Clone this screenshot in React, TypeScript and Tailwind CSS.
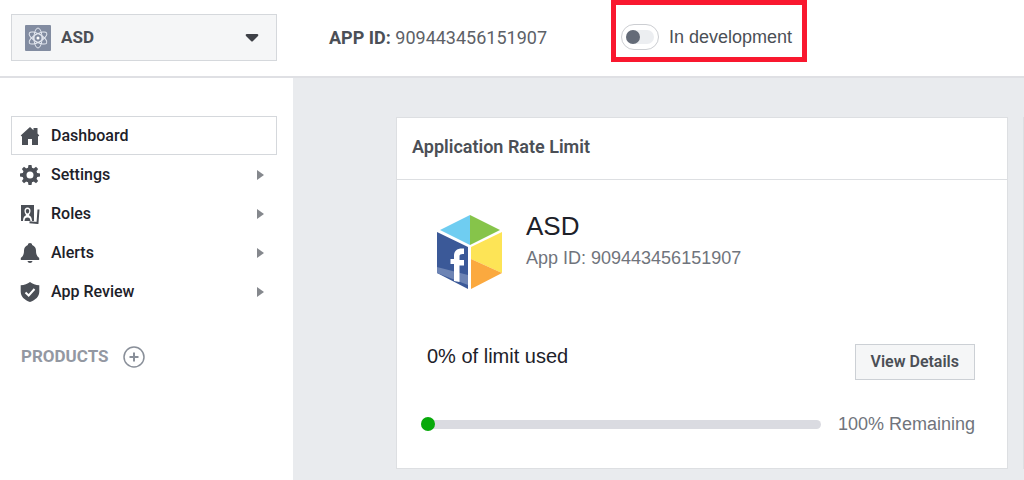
import React, { useState } from "react";

const iconClass = "w-5 h-5 shrink-0 text-[#4b4f56]";

function HomeIcon() {
  return (
    <svg className={iconClass} viewBox="0 0 20 20" fill="currentColor" aria-hidden="true">
      <path d="M10 1 0.7 9.4l1.2 1.2L2 10.500V19h6v-6h4v6h6v-8.500l.1.1 1.2-1.2L17.500 7.600V2h-4v2.200z" />
    </svg>
  );
}

function GearIcon() {
  return (
    <svg className={iconClass} viewBox="0 0 20 20" aria-hidden="true">
      <circle cx="10" cy="10" r="5.500" fill="none" stroke="currentColor" strokeWidth="4" />
      <g fill="currentColor">
        {[0, 45, 90, 135, 180, 225, 270, 315].map((angle) => (
          <path key={angle} d="M7.800 4 8.500 0h3l.7 4z" transform={`rotate(${angle} 10 10)`} />
        ))}
      </g>
    </svg>
  );
}

function RolesIcon() {
  return (
    <svg className={iconClass} viewBox="0 0 20 20" aria-hidden="true">
      <path d="M1 1h13v16H1z" fill="currentColor" />
      <path
        d="M7.500 3.500c-2 0-3 1.400-3 3.300 0 1.600.5 2.800 1.300 3.500v1.200C4.500 12 3.200 13 3 17h1.500c.3-2.500 1-3.500 3-3.500s2.700 1 3 3.500H12c-.2-4-1.500-5-2.800-5.500v-1.200c.8-.7 1.300-1.900 1.300-3.500 0-1.900-1-3.300-3-3.300z"
        fill="#fff"
      />
      <path d="M7.500 5c1.200 0 1.700.8 1.700 2s-.6 2.500-1.700 2.500S5.800 8.200 5.800 7s.5-2 1.700-2z" fill="currentColor" />
      <path d="M18.500 5.500 17.500 19l-8-.8" fill="none" stroke="currentColor" strokeWidth="2" />
    </svg>
  );
}

function BellIcon() {
  return (
    <svg className={iconClass} viewBox="0 0 20 20" fill="currentColor" aria-hidden="true">
      <path d="M10 0c-1.400 0-2.200.9-2.100 2C5.300 2.900 4 5 4 7.500c0 3.500-.7 5.500-3.200 7.500v2h18.400v-2C16.700 13 16 11 16 7.500 16 5 14.700 2.900 12.100 2 12.200.9 11.400 0 10 0z" />
      <path d="M7.500 18h5c-.3 1.300-1.200 2-2.500 2s-2.200-.7-2.500-2z" />
    </svg>
  );
}

function ShieldIcon() {
  return (
    <svg className={iconClass} viewBox="0 0 20 20" aria-hidden="true">
      <path
        fill="currentColor"
        d="M10 0c2.500 2 5.500 3 9.300 3.200v6.300c0 5-3.700 8.500-9.300 10.500C4.400 18 .7 14.500.7 9.500V3.200C4.500 3 7.500 2 10 0z"
      />
      <path d="M5.500 10.500 8.700 13.500 14.500 7" fill="none" stroke="#fff" strokeWidth="2" />
    </svg>
  );
}

function AtomIcon() {
  return (
    <svg className="w-[26px] h-[26px] shrink-0" viewBox="0 0 26 26" fill="none" aria-hidden="true">
      <rect width="26" height="26" rx="1" fill="#828ca1" />
      <g stroke="#e4e8f0" strokeWidth="1">
        <ellipse cx="13" cy="13" rx="4" ry="10" />
        <ellipse cx="13" cy="13" rx="4" ry="10" transform="rotate(60 13 13)" />
        <ellipse cx="13" cy="13" rx="4" ry="10" transform="rotate(120 13 13)" />
        <circle cx="13" cy="13" r="4.500" />
      </g>
      <circle cx="13" cy="13" r="1.500" fill="#fff" />
    </svg>
  );
}

function CubeLogo() {
  return (
    <svg className="w-[68px] h-[76px] shrink-0" viewBox="0 0 68 76" aria-hidden="true">
      <path d="M34 1v30L4 16z" fill="#6fcdf1" />
      <path d="M34 1v30l30-15z" fill="#86c44a" />
      <path d="M1 18l31 15v42L1 59z" fill="#3b5998" />
      <path d="M1 53l31 8v10L1 59z" fill="#6d84b4" />
      <path d="M35 33l31-15v41L35 45z" fill="#fde456" />
      <path d="M35 45l31 14-31 16z" fill="#fba93f" />
      <path
        d="M18 67V50h-3.500v-5H18v-3c0-5.500 3-8 10-7.500v5.500c-3.500-.3-4.500.5-4.500 2.500v3.500H28v5.500h-4.500V68z"
        fill="#fff"
      />
    </svg>
  );
}

const menu = [
  { label: "Dashboard", icon: <HomeIcon /> },
  { label: "Settings", icon: <GearIcon />, nested: true },
  { label: "Roles", icon: <RolesIcon />, nested: true },
  { label: "Alerts", icon: <BellIcon />, nested: true },
  { label: "App Review", icon: <ShieldIcon />, nested: true },
];

function Header() {
  const [live, setLive] = useState(false);

  return (
    <header className="flex h-[78px] border-b-2 border-[#dfe0e4] bg-white">
      <div className="w-[293px] shrink-0 pl-[11px] pr-4 pt-[14px]">
        <label className="flex h-[47px] items-center border border-[#d5d8dc] bg-[#f5f6f7] pl-[13px] pr-[17px]">
          <AtomIcon />
          <select
            aria-label="App"
            className="h-full min-w-0 flex-1 appearance-none bg-transparent pl-[10px] text-[17px] font-bold text-[#4b4f56] focus:outline-none"
          >
            <option>ASD</option>
          </select>
          <svg className="h-2 w-[14px]" viewBox="0 0 14 8" fill="#3e4147" aria-hidden="true">
            <path d="M2 0h10q2 0 1 2L8 7q-1 1-2 0L1 2Q0 0 2 0z" />
          </svg>
        </label>
      </div>
      <div className="flex h-[74px] items-center pl-9">
        <p className="w-[282px] text-[18px] text-[#5d6167]">
          <strong className="font-bold text-[#4b4f56]">APP ID:</strong> 909443456151907
        </p>
      </div>
      <div className="h-[62px] border-[5px] border-[#f9182f] pl-[5px] pr-[10px]">
        <label className="flex h-full items-center gap-[10px] pt-3 font-['Liberation_Sans',Arial,sans-serif] text-[18px] leading-6 text-[#4b4f56]">
          <span className="flex h-[26px] w-[38px] items-center rounded-full border border-[#ccced2] px-1">
            <input
              type="checkbox"
              role="switch"
              checked={live}
              onChange={() => setLive(!live)}
              className="h-[14px] w-full appearance-none rounded-full bg-[#eceef1] before:block before:size-[14px] before:rounded-full before:bg-[#646b78] checked:before:ml-auto"
            />
          </span>
          In development
        </label>
      </div>
    </header>
  );
}

function Sidebar() {
  return (
    <nav className="w-[293px] shrink-0 bg-white pl-[11px] pr-4 pt-[38px]">
      <ul>
        {menu.map((item) => (
          <li key={item.label}>
            <a
              href="#"
              className={`flex h-[39px] items-center gap-[11px] border pl-2 pr-3 text-[16px] font-medium text-[#1d2129] ${
                item.nested ? "border-transparent" : "border-[#d5d8dc]"
              }`}
            >
              {item.icon}
              <span className="flex-1">{item.label}</span>
              {item.nested && (
                <svg className="h-[10px] w-[7px]" viewBox="0 0 7 10" fill="#85888d" aria-hidden="true">
                  <path d="M0 0 7 5 0 10z" />
                </svg>
              )}
            </a>
          </li>
        ))}
      </ul>
      <div className="mt-[33px] flex items-center gap-[14px] pl-[10px]">
        <h2 className="text-[17px] font-bold text-[#9398a2]">PRODUCTS</h2>
        <button aria-label="Add product">
          <svg className="h-[22px] w-[22px]" viewBox="0 0 22 22" fill="none" stroke="#898f99" aria-hidden="true">
            <circle cx="11" cy="11" r="10" strokeWidth="1.500" />
            <path d="M11 6.500v9M6.500 11h9" strokeWidth="2" />
          </svg>
        </button>
      </div>
    </nav>
  );
}

function RateLimitCard() {
  return (
    <section className="flex-1 border border-[#dddfe2] bg-white font-['Liberation_Sans',Arial,sans-serif]">
      <h2 className="flex h-[62px] items-center border-b border-[#dddfe2] px-[15px] pb-1 font-[Roboto,sans-serif] text-[18px] font-semibold text-[#4b4f56]">
        Application Rate Limit
      </h2>
      <div className="pl-[30px] pr-8 pt-[34px]">
        <div className="flex gap-[22px] pl-[9px]">
          <CubeLogo />
          <div>
            <h3 className="text-[26px] leading-6 text-[#1d2129]">ASD</h3>
            <p className="mt-2 text-[18px] leading-6 text-[#70747c]">App ID: 909443456151907</p>
          </div>
        </div>
        <div className="mt-[54px] flex items-start justify-between">
          <p className="text-[20px] leading-6 text-[#1d2129]">0% of limit used</p>
          <button className="h-9 border border-[#ccd0d5] bg-[#f5f6f7] px-[15px] font-[Roboto,sans-serif] text-[16px] font-semibold text-[#4b4f56]">
            View Details
          </button>
        </div>
        <div className="mt-8 flex items-center gap-[17px]">
          <div
            role="progressbar"
            aria-label="Limit used"
            aria-valuenow={0}
            className="-ml-[6px] flex h-[9px] flex-1 items-center rounded-full bg-[#dadbe1]"
          >
            <span className="size-[14px] rounded-full bg-[#07a90a]" />
          </div>
          <span className="text-[18px] leading-6 text-[#70747c]">100% Remaining</span>
        </div>
      </div>
    </section>
  );
}

export default function App() {
  return (
    <div className="flex min-h-screen flex-col bg-white font-[Roboto,sans-serif]">
      <Header />
      <div className="flex flex-1">
        <Sidebar />
        <main className="flex flex-1 gap-[15px] bg-[#e9ebee] pb-[11px] pl-[103px] pt-[39px]">
          <RateLimitCard />
          <div className="w-px bg-[#dddfe2]" />
        </main>
      </div>
    </div>
  );
}
